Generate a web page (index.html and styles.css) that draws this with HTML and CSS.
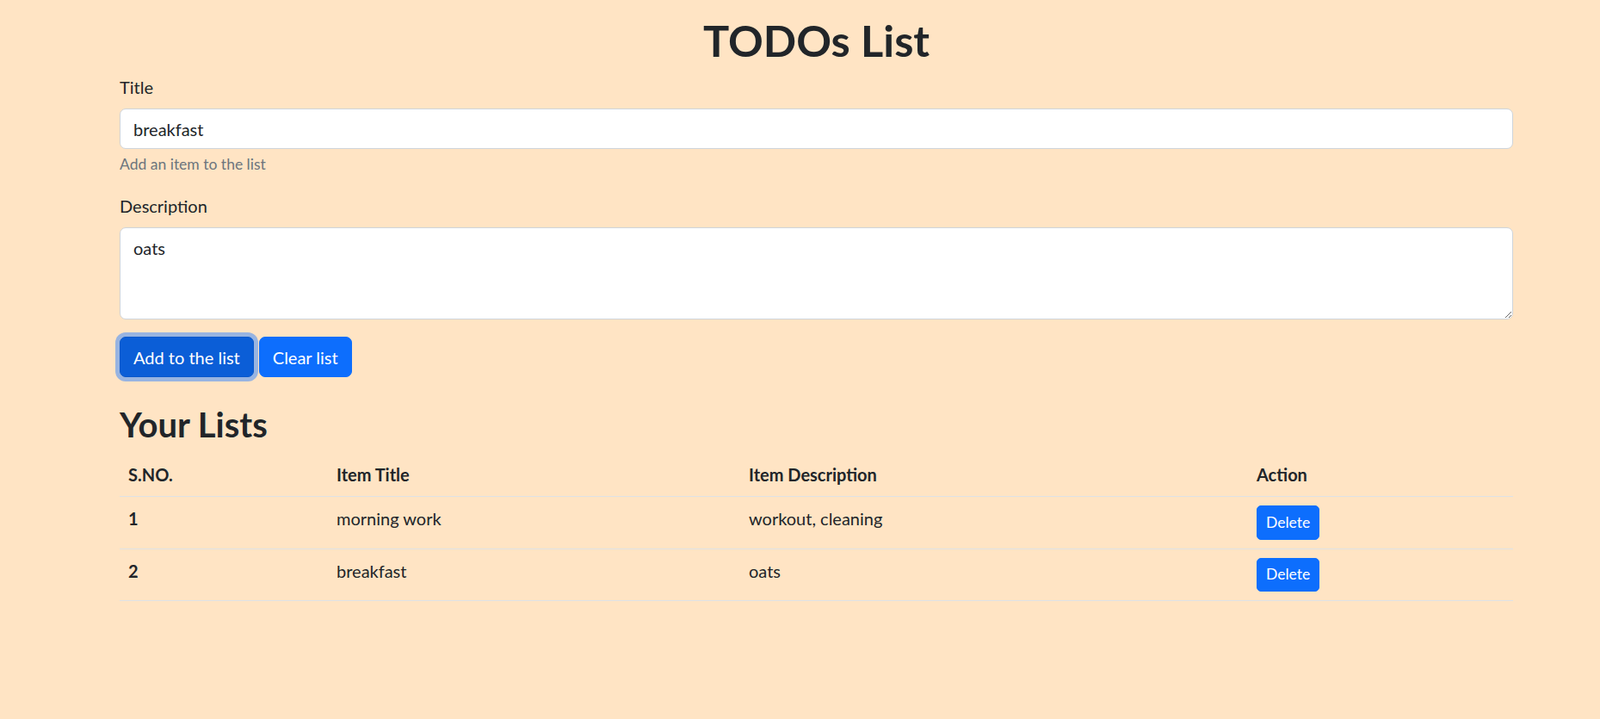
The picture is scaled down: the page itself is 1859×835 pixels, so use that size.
FILE: index.html
```html
<!DOCTYPE html>
<html lang="en">
<head>
<meta charset="utf-8">
<title>TODOs List</title>
<link rel="stylesheet" href="styles.css">
</head>
<body>
<div class="container">
  <h1 class="title">TODOs List</h1>
  <div class="field">
    <label class="label" for="title">Title</label>
    <input class="control" id="title" type="text" value="breakfast">
    <div class="form-text">Add an item to the list</div>
  </div>
  <div class="field">
    <label class="label" for="desc">Description</label>
    <textarea class="control area" id="desc" rows="3">oats</textarea>
  </div>
  <div class="actions">
    <button class="btn btn-focus">Add to the list</button>
    <button class="btn">Clear list</button>
  </div>
  <h2 class="subtitle">Your Lists</h2>
  <table class="table">
    <colgroup>
      <col class="col-1"><col class="col-2"><col class="col-3"><col class="col-4">
    </colgroup>
    <thead>
      <tr><th>S.NO.</th><th>Item Title</th><th>Item Description</th><th>Action</th></tr>
    </thead>
    <tbody>
      <tr><th>1</th><td>morning work</td><td>workout, cleaning</td><td><button class="btn btn-sm">Delete</button></td></tr>
      <tr><th>2</th><td>breakfast</td><td>oats</td><td><button class="btn btn-sm">Delete</button></td></tr>
    </tbody>
  </table>
</div>
</body>
</html>
```

FILE: styles.css
```css
* { box-sizing: border-box; }
body {
  margin: 0;
  background: #ffe4c4;
  color: #212529;
  font-family: Lato, "Liberation Sans", sans-serif;
  font-size: 20px;
  line-height: 1.5;
}
.container {
  width: 1619px;
  margin-left: 139px;
}
.title {
  text-align: center;
  font-size: 50.5px;
  font-weight: 700;
  line-height: 1.2;
  margin: 16.5px 0 9px;
}
.field { margin-bottom: 20px; }
.label {
  display: block;
  margin-bottom: 10px;
}
.control {
  display: block;
  width: 100%;
  padding: 7.5px 15px;
  font: inherit;
  color: #212529;
  background: #fff;
  border: 1px solid #ced4da;
  border-radius: 7px;
  outline: none;
}
.area { height: 107px; resize: vertical; }
.form-text {
  margin-top: 5px;
  font-size: 17.5px;
  color: #6c757d;
}
.actions {
  display: flex;
  gap: 6px;
}
.btn {
  font: inherit;
  color: #fff;
  background: #0d6efd;
  border: 1px solid #0d6efd;
  padding: 7.5px 15px;
  border-radius: 7px;
  line-height: 1.5;
  cursor: pointer;
}
.btn-focus {
  background: #0b5ed7;
  border-color: #0a58ca;
  box-shadow: 0 0 0 5px rgba(49, 132, 253, 0.5);
}
.btn-sm {
  font-size: 17.5px;
  padding: 5.5px 10px;
  border-radius: 5px;
}
.subtitle {
  font-size: 40px;
  font-weight: 700;
  line-height: 1.2;
  margin: 31px 0 9px;
}
.table {
  width: 100%;
  border-collapse: collapse;
  table-layout: fixed;
}
.col-1 { width: 242px; }
.col-2 { width: 479px; }
.col-3 { width: 590px; }
.table th, .table td {
  padding: 10px;
  text-align: left;
  vertical-align: top;
  border-bottom: 1px solid #dee2e6;
}
.table th { font-weight: 700; }
.table td { font-weight: 400; }
```
